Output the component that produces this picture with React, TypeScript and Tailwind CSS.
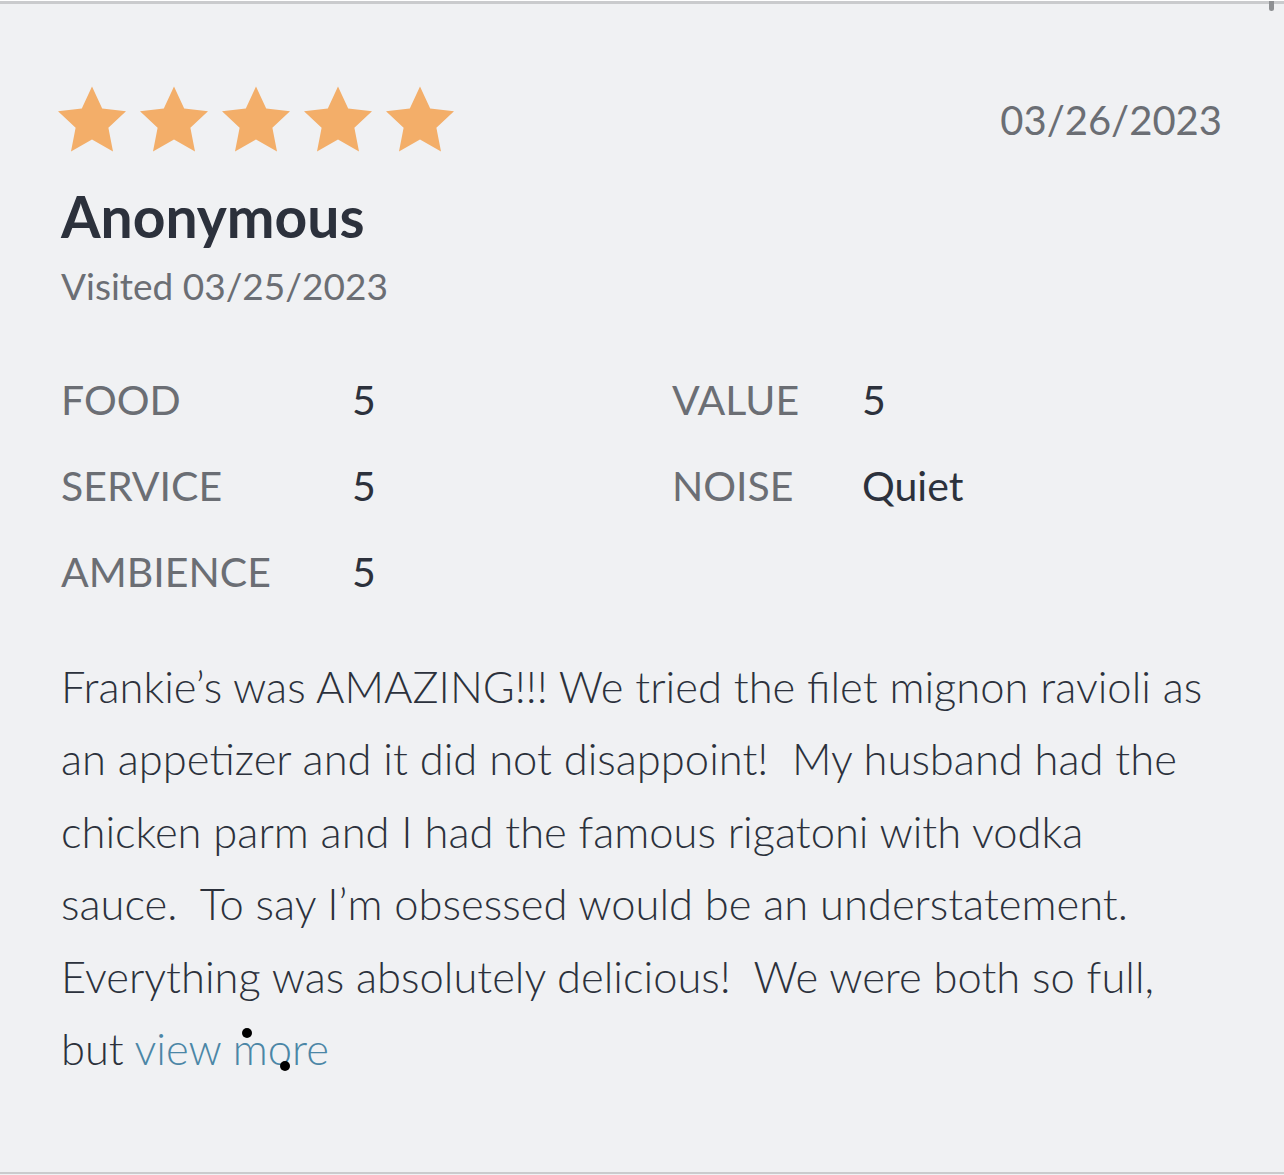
import React from "react";

const ratings = [
  { label: "FOOD", value: "5" },
  { label: "VALUE", value: "5" },
  { label: "SERVICE", value: "5" },
  { label: "NOISE", value: "Quiet" },
  { label: "AMBIENCE", value: "5" },
];

const lines = [
  "Frankie’s was AMAZING!!! We tried the filet mignon ravioli as",
  "an appetizer and it did not disappoint!  My husband had the",
  "chicken parm and I had the famous rigatoni with vodka",
  "sauce.  To say I’m obsessed would be an understatement.",
  "Everything was absolutely delicious!  We were both so full,",
];

function Star() {
  return (
    <svg width="68" height="66" viewBox="1 0.8 22 21" className="shrink-0">
      <path
        d="M12 0.8l3.3 7.1 7.7 0.9-5.7 5.3 1.5 7.7L12 17.9l-6.8 3.9 1.5-7.7L1 8.8l7.7-0.9z"
        fill="#f3ae69"
      />
    </svg>
  );
}

export default function App() {
  return (
    <div className="min-h-[1175px] bg-[#f0f1f3] font-['Lato',sans-serif]">
      <div className="relative h-[1173px] border-t-[3px] border-b-2 border-[#cacbcd] mt-[1px]">
        {/* scrollbar nub */}
        <div className="absolute right-[10px] -top-[3px] h-[10px] w-[5px] rounded-b-full bg-[#8e9093]" />

        <div className="pl-[61px] pr-[62px] pt-[82px]">
          <div className="flex items-start justify-between">
            <div className="flex gap-[14px] -ml-[3px]">
              {[0, 1, 2, 3, 4].map((i) => (
                <Star key={i} />
              ))}
            </div>
            <span className="mt-[14px] text-[40px] leading-none text-[#6b6e74]">
              03/26/2023
            </span>
          </div>

          <h2 className="mt-[36px] text-[57px] font-bold leading-none text-[#2c313c]">
            Anonymous
          </h2>
          <div className="mt-[22px] text-[37px] leading-none text-[#6b6e74]">
            Visited 03/25/2023
          </div>

          <div className="mt-[75px] grid grid-cols-[611px_1fr] gap-y-[45px]">
            {ratings.map((r) => (
              <div key={r.label} className="flex text-[41px] leading-none">
                <span
                  className={
                    r.label === "VALUE" || r.label === "NOISE"
                      ? "w-[190px] text-[#6b6e74]"
                      : "w-[291px] text-[#6b6e74]"
                  }
                >
                  {r.label}
                </span>
                <span className="text-[#2c313c]">{r.value}</span>
              </div>
            ))}
          </div>

          <div className="mt-[58px] whitespace-pre text-[43.5px] font-light leading-[72.4px] text-[#2c313c]">
            {lines.map((l) => (
              <div key={l}>{l}</div>
            ))}
            <div>
              {"but "}
              <a className="relative text-[#4b86a6]">
                view more
                <span className="absolute left-[107px] top-[6px] h-[10px] w-[10px] rounded-full bg-black" />
                <span className="absolute left-[145px] top-[39px] h-[10px] w-[10px] rounded-full bg-black" />
              </a>
            </div>
          </div>
        </div>
      </div>
    </div>
  );
}
